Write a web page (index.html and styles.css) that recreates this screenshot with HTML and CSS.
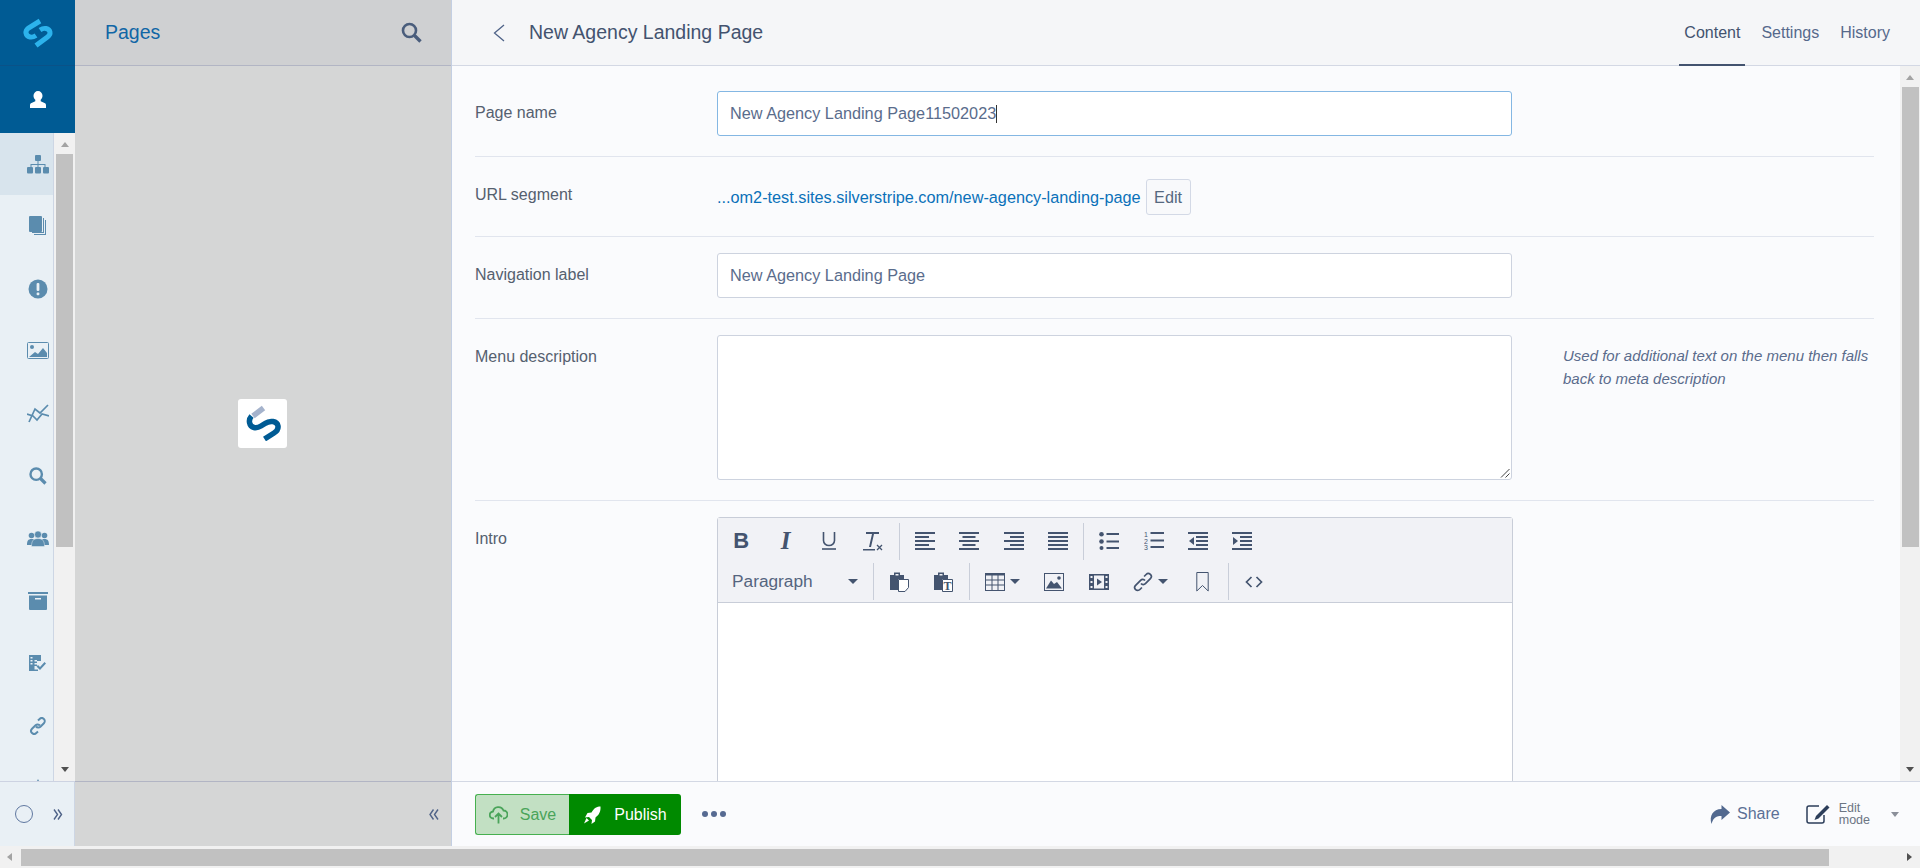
FILE: index.html

```html
<!DOCTYPE html>
<html lang="en">
<head>
  <meta charset="UTF-8" />
  <title>New Agency Landing Page</title>
  <link rel="stylesheet" href="styles.css">
</head>
<body>
  <div class="app">
    <nav class="sidebar">
      <div class="brand">
        <svg width="34" height="34" viewBox="0 0 34 34" fill="none" stroke="#2cb3ec" stroke-width="5"><path d="M19 5 L7.500 12 C3.500 15 4.500 20 9 21 C11.500 21.500 13.500 20.500 15 19.500"/><path d="M15 29.500 L26.500 21 C30.500 18 29.500 13.500 25 12.500 C22.500 12 20.500 13 19 14"/></svg>
      </div>
      <div class="profile">
        <svg width="16" height="17" viewBox="0 0 16 17"><path d="M8 0a4.500 4.800 0 0 1 4.500 4.800c0 1.700-.8 3.200-1.800 4v1.400l3.800 1.700c.9.400 1.500 1.200 1.500 2.100V17H0v-3c0-.9.600-1.700 1.500-2.100l3.800-1.700V8.800c-1-.8-1.800-2.300-1.800-4A4.500 4.800 0 0 1 8 0z" fill="#fff"/></svg>
      </div>
      <div class="nav-wrap">
        <ul class="nav-list">
          <li class="nav-item active">
            <svg width="22" height="19" viewBox="0 0 22 19" fill="#5b8cae"><rect x="8" y="0" width="6" height="6" rx="1"/><path d="M10.500 6h1v3h7v3h-1v-2h-6v2h-1v-2h-6v2h-1V9h7z"/><rect x="0" y="12" width="6" height="6.500" rx="1"/><rect x="8" y="12" width="6" height="6.500" rx="1"/><rect x="16" y="12" width="6" height="6.500" rx="1"/></svg>
          </li>
          <li class="nav-item">
            <svg width="18" height="21" viewBox="0 0 18 21" fill="#5b8cae"><rect x="0" y="0" width="13" height="16" rx="1"/><path d="M14 2h1v15H3v-1h11z"/><path d="M16 4h1v15H5v-1h11z"/></svg>
          </li>
          <li class="nav-item">
            <svg width="20" height="20" viewBox="0 0 20 20"><circle cx="10" cy="10" r="9.500" fill="#5b8cae"/><rect x="8.600" y="4" width="2.800" height="8" rx="1" fill="#e9f0f5"/><rect x="8.600" y="13.500" width="2.800" height="2.800" rx="1" fill="#e9f0f5"/></svg>
          </li>
          <li class="nav-item">
            <svg width="22" height="18" viewBox="0 0 22 18"><rect x=".5" y=".5" width="21" height="16" rx="1" fill="none" stroke="#5b8cae"/><path d="M2 15l6-5 3 2 5-6 4 5v4z" fill="#5b8cae"/><circle cx="5" cy="5" r="2" fill="#5b8cae"/></svg>
          </li>
          <li class="nav-item">
            <svg width="22" height="19" viewBox="0 0 22 19" fill="none" stroke="#5b8cae" stroke-width="1.700"><path d="M2 18L8 5l5 4 8-8"/><path d="M0 10l6 2 4 4 5-6 7 2"/></svg>
          </li>
          <li class="nav-item">
            <svg width="18" height="18" viewBox="0 0 18 18" fill="none" stroke="#5b8cae"><circle cx="7.200" cy="7.200" r="5.700" stroke-width="2.400"/><path d="M11.500 11.500l5 5" stroke-width="3.200"/></svg>
          </li>
          <li class="nav-item">
            <svg width="22" height="16" viewBox="0 0 22 16" fill="#5b8cae"><circle cx="4.500" cy="4.500" r="2.800"/><circle cx="17.500" cy="4.500" r="2.800"/><path d="M0 14c0-4 1-6 4.500-6s4.500 2 4.500 6zM13 14c0-4 1-6 4.500-6s4.500 2 4.500 6z"/><circle cx="11" cy="3.500" r="3.500" stroke="#e9f0f5" stroke-width=".5"/><path d="M4.500 15.500c0-5 1.500-8 6.500-8s6.500 3 6.500 8z" stroke="#e9f0f5" stroke-width=".5"/></svg>
          </li>
          <li class="nav-item">
            <svg width="20" height="18" viewBox="0 0 20 18" fill="#5b8cae"><rect x="0" y="0" width="20" height="2"/><path d="M1 3.500h18V17a1 1 0 0 1-1 1H2a1 1 0 0 1-1-1z"/><rect x="7" y="6" width="6" height="1.500" fill="#e9f0f5"/></svg>
          </li>
          <li class="nav-item">
            <svg width="17" height="16" viewBox="0 0 17 16" fill="#5b8cae"><path d="M0 0h12v6H8V5H5.500v1.500H8V8H5.500v1.500H8V11H5.500v3.500H9V16H0z"/><path d="M1.500 2h2v1.500h-2zM1.500 5h2v1.500h-2zM1.500 8h2v1.500h-2z" fill="#e9f0f5"/><path d="M7.500 11.500l1.500-1.500 2 2 4.500-5 1.500 1.500-6 6.500z"/></svg>
          </li>
          <li class="nav-item">
            <svg width="18" height="18" viewBox="0 0 18 18" fill="none" stroke="#5b8cae" stroke-width="2"><path d="M7 9.500a3 3 0 0 0 4.400.2l3.500-3.500a3 3 0 0 0-4.300-4.200L9 3.500"/><path d="M11 8.500a3 3 0 0 0-4.400-.2L3 11.800a3 3 0 0 0 4.300 4.200L9 14.500"/></svg>
          </li>
          <li class="nav-item">
            <svg width="18" height="18" viewBox="0 0 18 18" fill="#5b8cae"><path d="M9 0l9 18H0z"/></svg>
          </li>
        </ul>
        <div class="scrollbar vertical">
          <span class="arrow up"></span>
          <span class="thumb"></span>
          <span class="arrow down"></span>
        </div>
      </div>
      <div class="side-foot">
        <span class="ring"></span>
        <svg class="chev" width="10" height="11" viewBox="0 0 10 11" fill="none" stroke="#4f6388" stroke-width="1.400"><path d="M1 .5l3.500 5L1 10.500M5 .5l3.500 5-3.500 5"/></svg>
      </div>
    </nav>

    <aside class="panel">
      <header class="panel-head">
        <h2>Pages</h2>
        <svg width="21" height="21" viewBox="0 0 21 21" fill="none" stroke="#4a5d7c"><circle cx="8.500" cy="8.500" r="6.500" stroke-width="2.600"/><path d="M13.500 13.500l6 6" stroke-width="3.400"/></svg>
      </header>
      <div class="panel-body">
        <div class="spinner">
          <svg width="36" height="36" viewBox="0 0 36 36" fill="none" stroke-width="5.500"><path d="M18.500 3 L8 11" stroke="#a5b3cc"/><path d="M6.500 11 C3 15 4 21 9 22.500 C11.500 23 13.500 22.500 16 21 L20 18.500 C25 15 32 16 33 21 C33.500 24.500 31.500 26.500 29 28 L19.500 34" stroke="#005b94"/></svg>
        </div>
      </div>
      <footer class="panel-foot">
        <svg width="10" height="11" viewBox="0 0 10 11" fill="none" stroke="#4f6388" stroke-width="1.400"><path d="M4.500.5L1 5.500l3.500 5M9 .5L5.500 5.500 9 10.500"/></svg>
      </footer>
    </aside>

    <main class="editor">
      <header class="top-bar">
        <svg class="back" width="12" height="18" viewBox="0 0 12 18" fill="none" stroke="#4f6388" stroke-width="1.300"><path d="M11 1L1.500 9l9.500 8"/></svg>
        <h1>New Agency Landing Page</h1>
        <div class="tabs">
          <a class="tab current">Content</a>
          <a class="tab">Settings</a>
          <a class="tab">History</a>
        </div>
      </header>

      <div class="content-wrap">
        <form class="fields">
          <div class="field first">
            <label>Page name</label>
            <div class="input focus">New Agency Landing Page11502023<span class="caret"></span></div>
          </div>
          <div class="field url">
            <label>URL segment</label>
            <div class="url-value">
              <a>...om2-test.sites.silverstripe.com/new-agency-landing-page</a>
              <button type="button" class="edit-btn">Edit</button>
            </div>
          </div>
          <div class="field">
            <label>Navigation label</label>
            <div class="input">New Agency Landing Page</div>
          </div>
          <div class="field">
            <label>Menu description</label>
            <div class="input textarea">
              <svg width="10" height="10" viewBox="0 0 10 10" stroke="#444" fill="none"><path d="M9.500 1L1 9.500M9.500 5.500L5.500 9.500"/></svg>
            </div>
            <p class="hint">Used for additional text on the menu then falls back to meta description</p>
          </div>
          <div class="field intro">
            <label>Intro</label>
            <div class="tiny">
              <div class="toolbar">
                <div class="tool-row top">
                  <span class="tool"><b class="glyph bold">B</b></span>
                  <span class="tool"><i class="glyph ital">I</i></span>
                  <span class="tool"><svg width="14" height="18" viewBox="0 0 14 18" fill="none" stroke="#44546f" stroke-width="1.600"><path d="M1.500 0v8.500a5.500 5 0 0 0 11 0V0"/><path d="M0 17h14"/></svg></span>
                  <span class="tool"><svg width="20" height="19" viewBox="0 0 20 19" fill="#44546f"><path d="M3 0h13v2H11L8 15H6L9 2H3z"/><rect x="0" y="17" width="12" height="1.500"/><path d="M14 13l5 5M19 13l-5 5" stroke="#44546f" stroke-width="1.300"/></svg></span>
                  <span class="sep"></span>
                  <span class="tool"><svg width="20" height="18" viewBox="0 0 20 18" fill="#44546f"><path d="M0 0h20v2H0zM0 4h14v2H0zM0 8h20v2H0zM0 12h14v2H0zM0 16h20v2H0z"/></svg></span>
                  <span class="tool"><svg width="20" height="18" viewBox="0 0 20 18" fill="#44546f"><path d="M0 0h20v2H0zM3.500 4h13v2h-13zM0 8h20v2H0zM3.500 12h13v2h-13zM0 16h20v2H0z"/></svg></span>
                  <span class="tool"><svg width="20" height="18" viewBox="0 0 20 18" fill="#44546f"><path d="M0 0h20v2H0zM6 4h14v2H6zM0 8h20v2H0zM6 12h14v2H6zM0 16h20v2H0z"/></svg></span>
                  <span class="tool"><svg width="20" height="18" viewBox="0 0 20 18" fill="#44546f"><path d="M0 0h20v2H0zM0 4h20v2H0zM0 8h20v2H0zM0 12h20v2H0zM0 16h20v2H0z"/></svg></span>
                  <span class="sep"></span>
                  <span class="tool"><svg width="20" height="18" viewBox="0 0 20 18" fill="#44546f"><circle cx="2.500" cy="2.300" r="2.300"/><circle cx="2.500" cy="9.500" r="2.300"/><circle cx="2.500" cy="16" r="2"/><path d="M7.500 1h12.500v2H7.500zM7.500 8.500h12.500v2H7.500zM7.500 15h12.500v2H7.500z"/></svg></span>
                  <span class="tool"><svg class="num-icon" width="20" height="20" viewBox="0 0 20 20" fill="#44546f"><path d="M6.500 1h13.500v2H6.500zM6.500 8.500h13.500v2H6.500zM6.500 15h13.500v2H6.500z"/><text x="0" y="6" class="svg-num">1</text><text x="0" y="12.500" class="svg-num">2</text><text x="0" y="19" class="svg-num">3</text></svg></span>
                  <span class="tool"><svg width="20" height="18" viewBox="0 0 20 18" fill="#44546f"><path d="M0 0h20v2H0zM8 4h12v2H8zM8 8h12v2H8zM8 12h12v2H8zM0 16h20v2H0z"/><path d="M6 5v8L1 9z"/></svg></span>
                  <span class="tool"><svg width="20" height="18" viewBox="0 0 20 18" fill="#44546f"><path d="M0 0h20v2H0zM8 4h12v2H8zM8 8h12v2H8zM8 12h12v2H8zM0 16h20v2H0z"/><path d="M1 5v8l5-4z"/></svg></span>
                </div>
                <div class="tool-row">
                  <span class="format">Paragraph<span class="drop"></span></span>
                  <span class="sep"></span>
                  <span class="tool"><svg width="19" height="20" viewBox="0 0 19 20"><path fill-rule="evenodd" d="M0 3h4V.5h6V3h4v4H8v11H0zM5.500 2v1.500h3V2z" fill="#44546f"/><path d="M8.500 7.500h10v8l-3.500 4h-6.500z" fill="#fff" stroke="#44546f"/></svg></span>
                  <span class="tool"><svg width="19" height="20" viewBox="0 0 19 20"><path fill-rule="evenodd" d="M0 3h4V.5h6V3h4v4H8v11H0zM5.500 2v1.500h3V2z" fill="#44546f"/><path d="M8.500 7.500h10v12h-10z" fill="#fff" stroke="#44546f"/><text x="13.500" y="17.500" class="svg-t">T</text></svg></span>
                  <span class="sep"></span>
                  <span class="tool wide"><svg width="20" height="18" viewBox="0 0 20 18" fill="none" stroke="#44546f"><rect x=".5" y=".5" width="19" height="17"/><path d="M0 1.500h20" stroke-width="2"/><path d="M7 2v15M13 2v15M0 7h20M0 12h20"/></svg><span class="drop"></span></span>
                  <span class="tool"><svg width="20" height="18" viewBox="0 0 20 18"><rect x=".5" y=".5" width="19" height="17" fill="none" stroke="#44546f"/><path d="M2 15.500l5-8 3 3.500 3-2 5 6.500z" fill="#44546f"/><circle cx="15" cy="5" r="1.800" fill="#44546f"/></svg></span>
                  <span class="tool"><svg width="20" height="16" viewBox="0 0 20 16" fill="#44546f"><path d="M0 0h20v16H0z"/><path d="M5 1.500h10v13H5zM1.500 2h2v2h-2zM1.500 7h2v2h-2zM1.500 12h2v2h-2zM16.500 2h2v2h-2zM16.500 7h2v2h-2zM16.500 12h2v2h-2z" fill="#f1f2f6"/><path d="M8 4.500l5 3.500-5 3.500z"/></svg></span>
                  <span class="tool wide"><svg width="20" height="20" viewBox="0 0 20 20" fill="none" stroke="#44546f" stroke-width="1.700"><path d="M8 11.500a3 3 0 0 0 4.400.2l5-5a3 3 0 0 0-4.300-4.200l-2 2"/><path d="M12 8.500a3 3 0 0 0-4.400-.2l-5 5a3 3 0 0 0 4.300 4.200l2-2"/></svg><span class="drop"></span></span>
                  <span class="tool"><svg width="13" height="20" viewBox="0 0 13 20" fill="none" stroke="#44546f"><path d="M.8.500h11.400v18.500l-5.700-5.500L.8 19z"/></svg></span>
                  <span class="sep"></span>
                  <span class="tool"><svg width="18" height="12" viewBox="0 0 18 12" fill="none" stroke="#44546f" stroke-width="1.700"><path d="M6.500 1L1.500 6l5 5M11.500 1l5 5-5 5"/></svg></span>
                </div>
              </div>
              <div class="tiny-body"></div>
            </div>
          </div>
        </form>
        <div class="scrollbar vertical main-scroll">
          <span class="arrow up"></span>
          <span class="thumb"></span>
          <span class="arrow down"></span>
        </div>
      </div>

      <footer class="actions">
        <div class="btn-group">
          <button type="button" class="btn-save">
            <svg width="19" height="19" viewBox="0 0 19 19" fill="none" stroke="#4aa45a" stroke-width="1.800"><path d="M5 13.500H4.500a3.500 3.500 0 0 1-.5-7 5.500 5.500 0 0 1 10.500-1 4 4 0 0 1 0 8H14"/><path d="M9.500 18.500V9M6 12l3.500-3.500L13 12"/></svg>
            Save
          </button>
          <button type="button" class="btn-publish">
            <svg width="18" height="18" viewBox="0 0 18 18" fill="#fff"><path d="M17.500.5c.3 4.500-1 8-5 11l-.5 4-3.500 2.500.5-4-3-3-4 .5L4.500 7l4-.5C11 2 14 .5 17.500.5z"/><path d="M3.500 12l2.500 2.500-5 3z"/></svg>
            Publish
          </button>
        </div>
        <div class="dots"><span></span><span></span><span></span></div>
        <div class="foot-right">
          <span class="share">
            <svg width="21" height="19" viewBox="0 0 21 19" fill="#52698f"><path d="M12.500 0L21 7.500 12.500 15v-4c-5 0-8 1-10 8C0 11 4 4 12.500 4z"/></svg>
            Share
          </span>
          <span class="mode">
            <svg width="24" height="20" viewBox="0 0 24 20" fill="none"><path d="M13 2H3a2 2 0 0 0-2 2v13a2 2 0 0 0 2 2h13a2 2 0 0 0 2-2v-6" stroke="#2c3e5a" stroke-width="1.500"/><path d="M21 1l2.500 2.500-11 11-4 1.500 1.500-4z" fill="#2c3e5a"/></svg>
            <span class="mode-label">Edit<br>mode</span>
            <span class="drop gray"></span>
          </span>
        </div>
      </footer>
    </main>
  </div>

  <div class="scrollbar horizontal">
    <span class="arrow left"></span>
    <span class="thumb"></span>
    <span class="arrow right"></span>
  </div>
</body>
</html>
```

FILE: styles.css

```css
* {
  box-sizing: border-box;
}
html, body {
  height: 100%;
}
body {
  margin: 0;
  overflow: hidden;
  display: flex;
  flex-direction: column;
  font-family: "Liberation Sans", Arial, sans-serif;
  font-size: 16px;
  color: #4f6388;
  background: #f1f1f1;
}
.app {
  height: 846px;
  display: flex;
}

/* left icon bar */
.sidebar {
  width: 75px;
  flex: none;
  display: flex;
  flex-direction: column;
  background: #e9f0f5;
}
.brand {
  height: 66px;
  display: flex;
  align-items: center;
  justify-content: center;
  background: #005b94;
  border-bottom: 1px solid #0a5288;
}
.profile {
  height: 67px;
  display: flex;
  align-items: center;
  justify-content: center;
  padding-bottom: 1px;
  background: #005b94;
}
.nav-wrap {
  height: 648px;
  display: flex;
  overflow: hidden;
}
.nav-list {
  list-style: none;
  margin: 0;
  padding: 0;
  width: 54px;
  border-right: 1px solid #cdd6e4;
}
.nav-item {
  height: 62.4px;
  display: flex;
  align-items: center;
  justify-content: center;
  padding-left: 22px;
}
.nav-item svg {
  flex: none;
}
.nav-item.active {
  background: #d8e4ed;
}
.side-foot {
  height: 65px;
  display: flex;
  align-items: center;
  gap: 20px;
  padding: 0 0 0 15px;
  border-top: 1px solid #cdd3e2;
  border-right: 1px solid #cdd6e4;
}
.ring {
  width: 18px;
  height: 18px;
  border: 1px solid #6078a0;
  border-radius: 50%;
}

/* scrollbars */
.scrollbar {
  display: flex;
  background: #f1f1f1;
}
.scrollbar.vertical {
  width: 21px;
  flex: none;
  flex-direction: column;
  align-items: center;
}
.scrollbar.vertical .thumb {
  flex: none;
  width: 17px;
  background: #c1c1c1;
}
.sidebar .thumb {
  height: 393px;
}
.main-scroll {
  margin-left: auto;
}
.scrollbar.main-scroll {
  width: 20px;
}
.main-scroll .thumb {
  height: 460px;
}
.arrow {
  flex: none;
  width: 0;
  height: 0;
  border: 0 solid transparent;
}
.arrow.up {
  margin: 9px 0 7px;
  border-width: 0 4.500px 5px;
  border-bottom-color: #a3a3a3;
}
.arrow.down {
  margin-top: auto;
  margin-bottom: 9px;
  border-width: 5px 4.500px 0;
  border-top-color: #505050;
}
.scrollbar.horizontal {
  height: 22px;
  align-items: center;
  padding: 0 0 0 7px;
}
.scrollbar.horizontal .thumb {
  width: 1808px;
  height: 17px;
  margin-left: 9px;
  background: #c1c1c1;
}
.arrow.left {
  border-width: 4.500px 5px 4.500px 0;
  border-right-color: #a3a3a3;
}
.arrow.right {
  margin-left: auto;
  margin-right: 8px;
  border-width: 4.500px 0 4.500px 5px;
  border-left-color: #505050;
}

/* pages panel */
.panel {
  width: 377px;
  flex: none;
  display: flex;
  flex-direction: column;
  background: #d5d6d6;
  border-right: 1px solid #c3cfe3;
}
.panel-head {
  height: 66px;
  flex: none;
  display: flex;
  align-items: center;
  justify-content: space-between;
  padding: 0 29px 0 30px;
  background: #cfd0d2;
  border-bottom: 1px solid #b2b5c4;
}
.panel-head h2 {
  margin: 0;
  font-size: 19.500px;
  font-weight: normal;
  color: #1166a6;
}
.panel-body {
  flex: 1;
  display: flex;
  align-items: center;
  justify-content: center;
  padding: 0 1px 1px 0;
}
.spinner {
  width: 49px;
  height: 49px;
  display: flex;
  align-items: center;
  justify-content: center;
  background: #fff;
  border-radius: 3px;
}
.panel-foot {
  height: 65px;
  flex: none;
  display: flex;
  align-items: center;
  justify-content: flex-end;
  padding-right: 12px;
  border-top: 1px solid #b2b5c4;
}

/* main edit area */
.editor {
  flex: 1;
  min-width: 0;
  display: flex;
  flex-direction: column;
  background: #fafbfd;
}
.top-bar {
  height: 66px;
  flex: none;
  display: flex;
  align-items: center;
  padding: 0 0 0 41px;
  background: #f5f6f8;
  border-bottom: 1px solid #d3d8e4;
}
.back {
  margin-right: 24px;
}
.top-bar h1 {
  margin: 0;
  font-size: 19.500px;
  font-weight: normal;
  color: #43536f;
}
.tabs {
  margin-left: auto;
  height: 66px;
  display: flex;
  margin-right: 19.500px;
}
.tab {
  padding: 0 5px;
  margin: 0 5.500px;
  display: flex;
  align-items: center;
  font-size: 16px;
  color: #56698c;
}
.tab.current {
  padding-top: 2px;
  color: #43536f;
  border-bottom: 2px solid #43536f;
}
.content-wrap {
  flex: 1;
  min-height: 0;
  display: flex;
  overflow: hidden;
}
.fields {
  width: 1399px;
  margin-left: 23px;
  flex: none;
}
.field {
  display: flex;
  align-items: flex-start;
  padding: 16px 0 20px;
  border-bottom: 1px solid #e1e5ee;
}
.field.first {
  padding-top: 25px;
}
.field.url {
  padding: 22px 0 21px;
}
.field label {
  width: 242px;
  flex: none;
  padding-top: 13px;
  font-size: 16px;
  color: #55606f;
}
.field.url label {
  padding-top: 7px;
}
.input {
  width: 795px;
  height: 45px;
  flex: none;
  padding: 0 12px;
  display: flex;
  align-items: center;
  font-size: 16.250px;
  color: #5a6c8c;
  background: #fff;
  border: 1px solid #cdd3df;
  border-radius: 3px;
}
.input.focus {
  border-color: #84b7e3;
}
.caret {
  width: 1px;
  height: 18px;
  background: #333;
}
.input.textarea {
  height: 145px;
  align-items: flex-end;
  justify-content: flex-end;
  padding: 0 1px 1px 0;
}
.hint {
  margin: 9px 0 0 51px;
  width: 320px;
  font-size: 15px;
  font-style: italic;
  line-height: 23px;
  color: #5a6c8c;
}
.url-value {
  display: flex;
  align-items: center;
  gap: 5px;
  height: 36px;
  font-size: 16.250px;
  color: #0a71b9;
}
.edit-btn {
  width: 45px;
  height: 36px;
  padding: 0;
  font: inherit;
  color: #55687f;
  background: #f8f9fb;
  border: 1px solid #d3d9e6;
  border-radius: 3px;
}
.field.intro {
  border: 0;
}
.tiny {
  width: 796px;
  flex: none;
  background: #fff;
  border: 1px solid #c8cdd8;
  border-radius: 3px 3px 0 0;
}
.toolbar {
  height: 85px;
  padding: 5px 0 0;
  display: flex;
  flex-direction: column;
  gap: 3px;
  background: #f1f2f6;
  border-bottom: 1px solid #c8cdd8;
}
.tool-row {
  height: 37px;
  display: flex;
  align-items: center;
}
.tool-row.top .tool {
  padding-bottom: 1px;
}
.tool-row.top .tool:first-child {
  margin-left: 1px;
  margin-right: -1px;
}
.tool {
  width: 44.400px;
  height: 100%;
  flex: none;
  display: flex;
  align-items: center;
  justify-content: center;
}
.tool.wide {
  width: 59.400px;
  gap: 5px;
}
.glyph {
  font-size: 22px;
  color: #44546f;
  font-style: normal;
}
.glyph.bold {
  font-weight: bold;
}
.glyph.ital {
  font-family: "Liberation Serif", serif;
  font-style: italic;
  font-weight: bold;
  font-size: 25px;
  margin-left: 2px;
}
.svg-t {
  font-family: "Liberation Serif", serif;
  font-weight: bold;
  font-size: 12px;
  text-anchor: middle;
  fill: #44546f;
}
.svg-num {
  font-family: "Liberation Sans", sans-serif;
  font-size: 7px;
  fill: #44546f;
}
.sep {
  width: 1px;
  height: 37px;
  flex: none;
  margin: 0 3px;
  background: #c9ced9;
}
.format {
  width: 152px;
  padding: 0 12px 0 14px;
  display: flex;
  align-items: center;
  justify-content: space-between;
  font-size: 17.300px;
  color: #55657f;
}
.drop {
  width: 0;
  height: 0;
  flex: none;
  border-style: solid;
  border-width: 5px 5px 0;
  border-color: #44546f transparent transparent;
}
.drop.gray {
  border-width: 5px 4.500px 0;
  border-color: #8a8f99 transparent transparent;
  margin-left: 12px;
}
.tiny-body {
  height: 300px;
}

/* bottom action bar */
.actions {
  height: 65px;
  flex: none;
  display: flex;
  align-items: center;
  padding: 0 21px 0 23px;
  border-top: 1px solid #d3d8e4;
  background: #fafbfd;
}
.btn-group {
  display: flex;
  height: 41px;
}
.btn-group button {
  height: 100%;
  display: flex;
  align-items: center;
  padding: 1px 0 0;
  font: inherit;
  font-size: 16px;
}
.btn-save {
  width: 94px;
  justify-content: center;
  gap: 12px;
  color: #4aa45a;
  background: #c2e0c3;
  border: 1px solid #46b04f;
  border-right: 0;
  border-radius: 3px 0 0 3px;
}
.btn-publish {
  width: 112px;
  justify-content: center;
  gap: 13px;
  color: #fff;
  background: #008a00;
  border: 0;
  border-radius: 0 3px 3px 0;
}
.dots {
  display: flex;
  gap: 3px;
  margin-left: 21px;
}
.dots span {
  width: 6px;
  height: 6px;
  border-radius: 50%;
  background: #566a92;
}
.foot-right {
  margin-left: auto;
  display: flex;
  align-items: center;
  gap: 26px;
}
.share {
  display: flex;
  align-items: center;
  gap: 7px;
  font-size: 16px;
  color: #5c7096;
}
.mode {
  display: flex;
  align-items: center;
  gap: 9px;
}
.mode-label {
  font-size: 12.500px;
  line-height: 12.500px;
  color: #6c7583;
}
```
